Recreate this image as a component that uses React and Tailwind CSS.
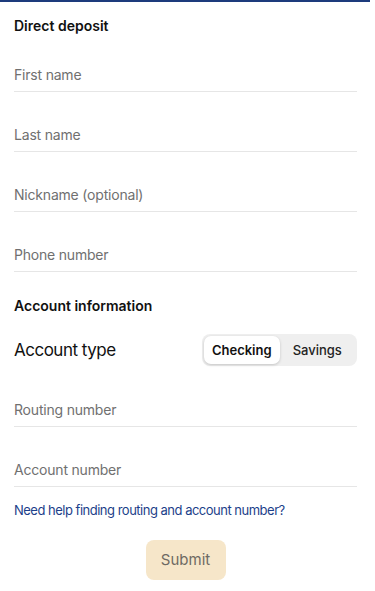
import React, { useState } from 'react'

const font = { fontFamily: 'Inter, "Noto Sans", sans-serif' }

function Field({ label, top = 'pt-[33px]' }) {
  return (
    <div className={`${top} pb-[6px] border-b border-[#e6e6e6]`}>
      <div className="text-[14px] leading-[20px] h-[20px] tracking-[-0.2px] text-[#707070]">{label}</div>
    </div>
  )
}

function AccountType() {
  const [type, setType] = useState('Checking')
  return (
    <div className="flex items-center justify-between mt-[18px] h-[32px]">
      <span className="text-[17px] leading-[22px] tracking-[-0.5px] text-[#111]">Account type</span>
      <div className="flex w-[155px] h-[32px] p-[2px] rounded-lg bg-[#efefef]">
        {['Checking', 'Savings'].map(t => (
          <button
            key={t}
            onClick={() => setType(t)}
            className={`flex-1 rounded-[7px] text-[13px] leading-[18px] ${
              type === t ? 'bg-white font-semibold text-[#111] shadow-[0_1px_3px_rgba(0,0,0,0.18)]' : 'font-medium text-[#222]'
            }`}
          >
            {t}
          </button>
        ))}
      </div>
    </div>
  )
}

export default function App() {
  return (
    <div className="w-[370px] min-h-[591px] bg-white" style={font}>
      <div className="h-[2px] bg-[#1d3b7c]" />
      <div className="px-[14px] mr-[-1px]">
        <h2 className="pt-[14px] text-[14px] leading-[20px] font-semibold text-[#111]">Direct deposit</h2>
        <Field label="First name" top="pt-[29px]" />
        <Field label="Last name" />
        <Field label="Nickname (optional)" />
        <Field label="Phone number" />

        <h2 className="mt-[24px] text-[14px] leading-[20px] font-semibold text-[#111]">Account information</h2>
        <AccountType />
        <Field label="Routing number" top="pt-[34px]" />
        <Field label="Account number" />

        <a href="#" className="block mt-[14px] text-[13px] leading-[18px] tracking-[-0.5px] text-[#1d3f8a]">
          Need help finding routing and account number?
        </a>
        <div className="flex justify-center mt-[21px]">
          <button disabled className="w-[80px] h-[40px] rounded-lg bg-[#f6e6c9] text-[15px] leading-[20px] text-[#6e6a63]">
            Submit
          </button>
        </div>
      </div>
    </div>
  )
}
